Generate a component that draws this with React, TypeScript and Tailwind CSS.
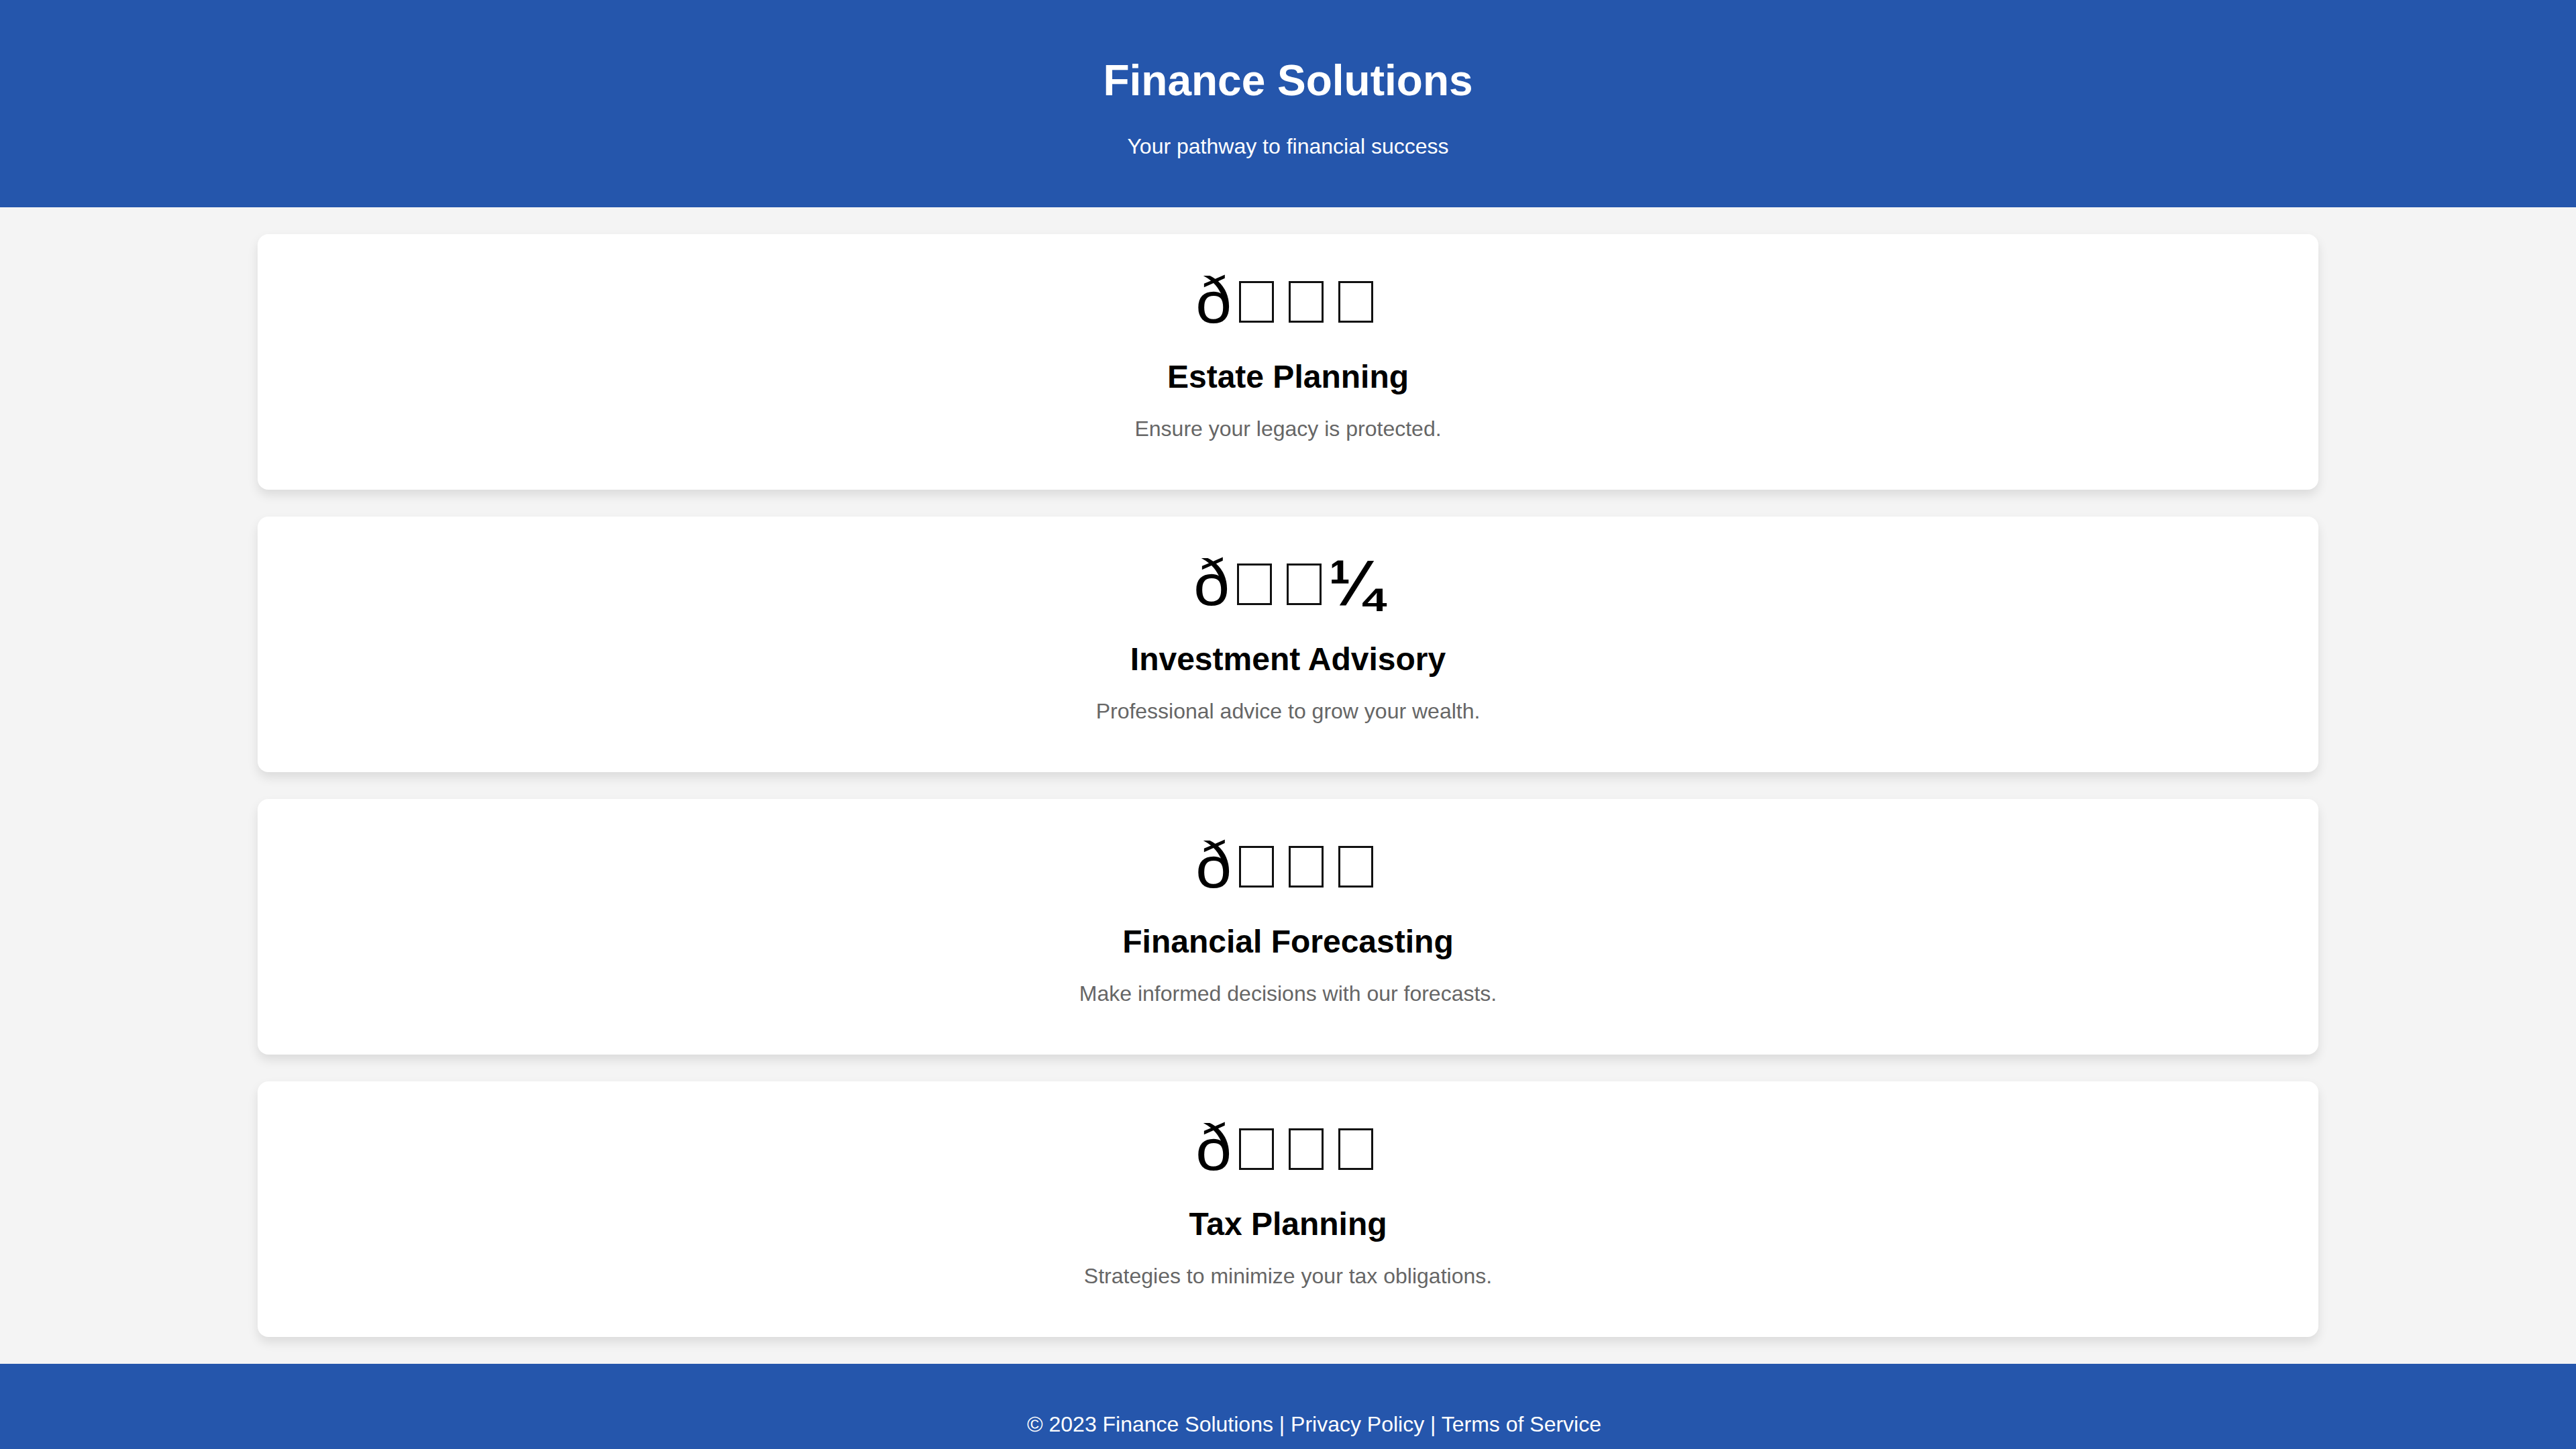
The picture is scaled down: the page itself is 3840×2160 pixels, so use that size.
import React from 'react';

interface Service {
  icon: string;
  title: string;
  text: string;
}

// the icons are emoji bytes read as latin-1, so they show as mojibake
const services: Service[] = [
  { icon: '\u00F0\u009F\u0093\u009C', title: 'Estate Planning', text: 'Ensure your legacy is protected.' },
  { icon: '\u00F0\u009F\u0092\u00BC', title: 'Investment Advisory', text: 'Professional advice to grow your wealth.' },
  { icon: '\u00F0\u009F\u0093\u0088', title: 'Financial Forecasting', text: 'Make informed decisions with our forecasts.' },
  { icon: '\u00F0\u009F\u0093\u008A', title: 'Tax Planning', text: 'Strategies to minimize your tax obligations.' },
];

// control characters come out as empty boxes (tofu), draw them as such
const Mojibake: React.FC<{ text: string }> = ({ text }) => (
  <>
    {Array.from(text).map((ch, i) => {
      const code = ch.charCodeAt(0);
      if (code >= 0x80 && code <= 0x9f) {
        return (
          <span
            key={i}
            className="inline-block align-baseline w-[52px] h-[62px] border-[3px] border-[#111] mx-[11px] overflow-hidden text-transparent text-[10px] leading-none"
          >
            {ch}
          </span>
        );
      }
      return (
        <span key={i} className={code === 0xbc ? 'font-bold' : ''}>
          {ch}
        </span>
      );
    })}
  </>
);

const ServiceCard: React.FC<{ service: Service }> = ({ service }) => (
  <div className="bg-white rounded-[16px] shadow-[0_8px_16px_rgba(0,0,0,0.1)] p-[40px] h-[381px] text-center">
    <div className="mt-[4px] text-[96px] leading-[110px] text-black whitespace-nowrap">
      <Mojibake text={service.icon} />
    </div>
    <h3 className="mt-[31px] text-[48px] leading-[55px] font-bold text-black">{service.title}</h3>
    <p className="mt-[32px] text-[32px] leading-[37px] text-[#666666]">{service.text}</p>
  </div>
);

const App: React.FC = () => {
  return (
    <div className="min-h-screen bg-[#f4f4f4] font-['Liberation_Sans',Arial,sans-serif]">
      <header className="bg-[#2556ac] text-white text-center py-[40px] h-[309px]">
        <h1 className="mt-[43px] text-[64px] leading-[74px] font-bold">Finance Solutions</h1>
        <p className="mt-[43px] text-[32px] leading-[37px]">Your pathway to financial success</p>
      </header>

      <main className="w-[80%] mx-auto py-[40px] flex flex-col gap-[40px]">
        {services.map((s) => (
          <ServiceCard key={s.title} service={s} />
        ))}
      </main>

      <footer className="bg-[#2556ac] text-white text-center py-[40px]">
        <p className="my-[32px] pl-[78px] text-[32px] leading-[37px]">
          © 2023 Finance Solutions | Privacy Policy | Terms of Service
        </p>
      </footer>
    </div>
  );
};

export default App;
